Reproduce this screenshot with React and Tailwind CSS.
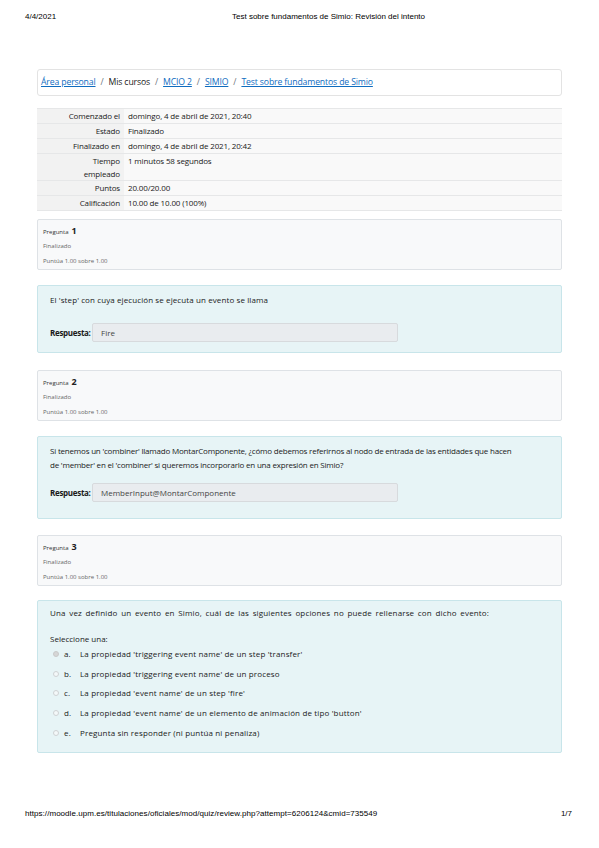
import React from "react";

const summary = [
  ["Comenzado el", "domingo, 4 de abril de 2021, 20:40"],
  ["Estado", "Finalizado"],
  ["Finalizado en", "domingo, 4 de abril de 2021, 20:42"],
  ["Tiempo empleado", "1 minutos 58 segundos"],
  ["Puntos", "20.00/20.00"],
  ["Calificación", "10.00 de 10.00 (100%)"],
];

const options = [
  ["a.", "La propiedad 'triggering event name' de un step 'transfer'", true],
  ["b.", "La propiedad 'triggering event name' de un proceso", false],
  ["c.", "La propiedad 'event name' de un step 'fire'", false],
  ["d.", "La propiedad 'event name' de un elemento de animación de tipo 'button'", false],
  ["e.", "Pregunta sin responder (ni puntúa ni penaliza)", false],
];

function Info({ n }) {
  return (
    <div className="h-[51px] rounded-[2px] border border-[#dee2e6] bg-[#f8f9fa] px-[5px] pt-[5px] text-[#555]">
      <div className="flex items-baseline gap-[3px] leading-[11px]">
        <span className="text-[6px] text-[#333]">Pregunta</span>
        <span className="text-[9px] font-bold text-[#222]">{n}</span>
      </div>
      <div className="mt-[4px] text-[6px] leading-[8px] text-[#666]">Finalizado</div>
      <div className="mt-[7px] text-[6px] leading-[8px] text-[#666]">Puntúa 1.00 sobre 1.00</div>
    </div>
  );
}

function Content({ children, className = "" }) {
  return (
    <div className={`rounded-[2px] border border-[#c8e5ea] bg-[#e7f4f6] px-[12px] text-[8px] text-[#1a1a1a] ${className}`}>
      {children}
    </div>
  );
}

function Answer({ value }) {
  return (
    <div className="flex items-center">
      <span className="w-[42px] font-bold tracking-[-0.3px]">Respuesta:</span>
      <div className="flex h-[19px] w-[306px] items-center rounded-[2px] border border-[#d7dadd] bg-[#e9ecef] px-[8px] text-[#444]">
        {value}
      </div>
    </div>
  );
}

export default function App() {
  return (
    <div
      className="relative flex h-[848px] w-[599px] flex-col bg-white"
      style={{ fontFamily: "'Open Sans', sans-serif" }}
    >
      {/* print header */}
      <div
        className="flex h-[35px] items-center px-[25px] pb-[1px] text-[8px] text-black"
        style={{ fontFamily: "'Liberation Sans', Arial, sans-serif" }}
      >
        <span className="w-[207px]">4/4/2021</span>
        <span>Test sobre fundamentos de Simio: Revisión del intento</span>
      </div>

      <div className="px-[37px] pt-[34px]">
        {/* breadcrumb */}
        <div className="flex h-[27px] items-center gap-[5px] rounded-[3px] border border-[#e3e3e3] px-[3px] text-[8.7px] tracking-[-0.15px] text-[#1a1a1a]">
          <a className="text-[#0f6cbf] underline">Área personal</a>
          <span className="text-[#6a737b]">/</span>
          <span>Mis cursos</span>
          <span className="text-[#6a737b]">/</span>
          <a className="text-[#0f6cbf] underline">MCIO 2</a>
          <span className="text-[#6a737b]">/</span>
          <a className="text-[#0f6cbf] underline">SIMIO</a>
          <span className="text-[#6a737b]">/</span>
          <a className="text-[#0f6cbf] underline">Test sobre fundamentos de Simio</a>
        </div>

        {/* summary table */}
        <table className="mt-[12px] w-full border-collapse text-[8px] tracking-[-0.15px] text-[#1a1a1a]">
          <tbody>
            {summary.map(([k, v]) => (
              <tr key={k} className="border-y border-[#e6e7e8] align-top">
                <th className="w-[87px] bg-[#f2f2f2] pr-[4px] text-right font-normal leading-[14px]">
                  {k === "Tiempo empleado" ? (
                    <div className="leading-[13px]">
                      Tiempo
                      <br />
                      empleado
                    </div>
                  ) : (
                    k
                  )}
                </th>
                <td className="bg-[#f9f9f9] pl-[4px] leading-[14px]">{v}</td>
              </tr>
            ))}
          </tbody>
        </table>

        <div className="mt-[8px]">
          <Info n="1" />
          <Content className="mt-[15px] h-[68px] pt-[8px]">
            <p className="leading-[12px] tracking-[0.1px]">
              El 'step' con cuya ejecución se ejecuta un evento se llama
            </p>
            <div className="mt-[17px]">
              <Answer value="Fire" />
            </div>
          </Content>

          <div className="mt-[17px]">
            <Info n="2" />
          </div>
          <Content className="mt-[15px] h-[83px] pt-[7px]">
            <p className="leading-[14px] tracking-[-0.2px]">
              Si tenemos un 'combiner' llamado MontarComponente, ¿cómo debemos referirnos al nodo de entrada de las entidades que hacen
              <br />
              de 'member' en el 'combiner' si queremos incorporarlo en una expresión en Simio?
            </p>
            <div className="mt-[11px]">
              <Answer value="MemberInput@MontarComponente" />
            </div>
          </Content>

          <div className="mt-[16px]">
            <Info n="3" />
          </div>
          <Content className="mt-[14px] h-[153px] pt-[5px]">
            <p className="leading-[14px] tracking-[0.15px] [word-spacing:1.4px]">
              Una vez definido un evento en Simio, cuál de las siguientes opciones no puede rellenarse con dicho evento:
            </p>
            <p className="mt-[12px] leading-[14px]">Seleccione una:</p>
            <div className="mt-[-2px] flex flex-col">
              {options.map(([l, t, checked]) => (
                <div key={l} className="flex h-[19.7px] items-center tracking-[0.15px]">
                  <span
                    className={`ml-[3px] h-[6px] w-[6px] rounded-full border ${
                      checked ? "border-[#c9c9c9] bg-[#d6d6d6]" : "border-[#cfd2d4] bg-[#f4f8f9]"
                    }`}
                  />
                  <span className="ml-[5px] w-[16px]">{l}</span>
                  <span>{t}</span>
                </div>
              ))}
            </div>
          </Content>
        </div>
      </div>

      {/* print footer */}
      <div
        className="mt-auto flex h-[40px] items-start justify-between pl-[25px] pr-[27px] text-[8px] text-black"
        style={{ fontFamily: "'Liberation Sans', Arial, sans-serif" }}
      >
        <span className="tracking-[0.05px]">https://moodle.upm.es/titulaciones/oficiales/mod/quiz/review.php?attempt=6206124&amp;cmid=735549</span>
        <span>1/7</span>
      </div>
    </div>
  );
}
